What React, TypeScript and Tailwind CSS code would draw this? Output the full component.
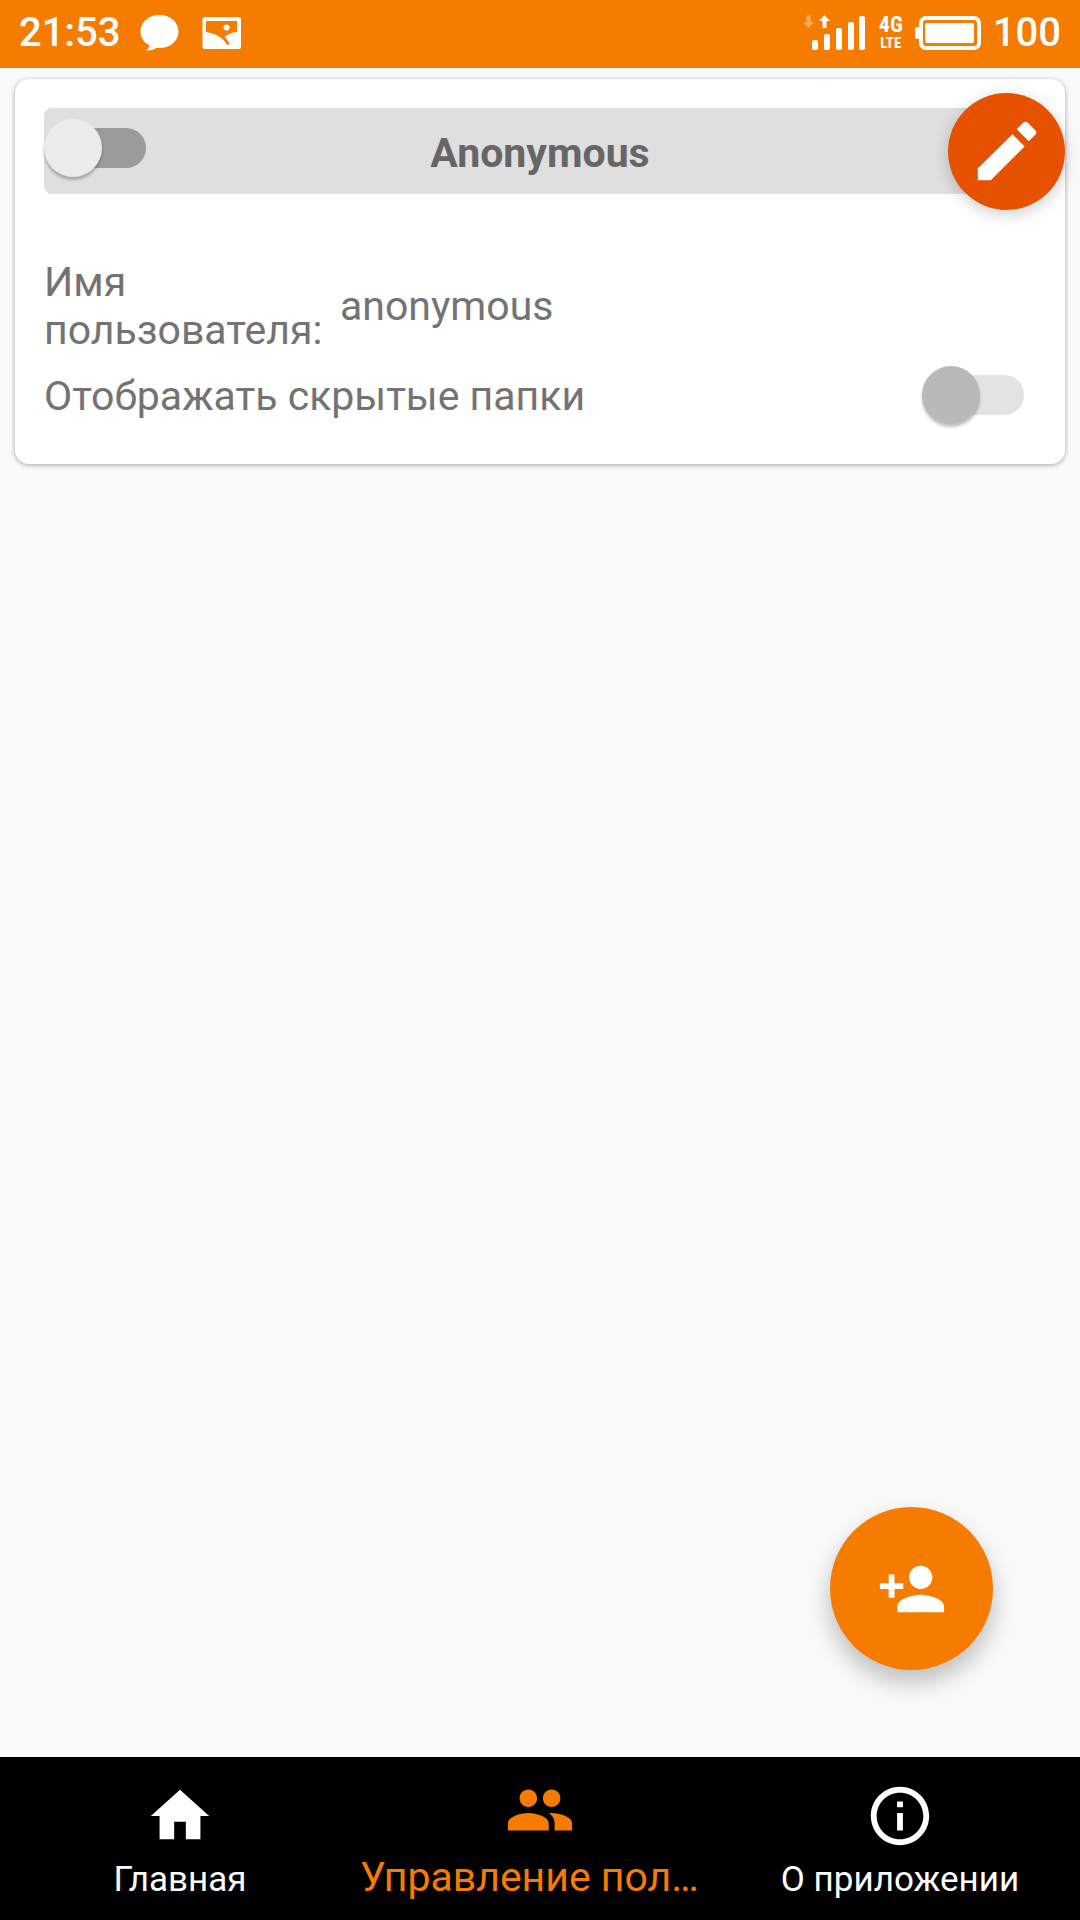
import { useState } from "react";
import clsx from "clsx";
import { MdHome, MdInfoOutline, MdPeople, MdPersonAdd } from "react-icons/md";

const tabs = [
  { id: "home", label: "Главная", icon: MdHome },
  { id: "users", label: "Управление пользователями", icon: MdPeople },
  { id: "about", label: "О приложении", icon: MdInfoOutline },
];

function ChatIcon() {
  return (
    <svg width="40" height="36" viewBox="0 0 40 36" fill="currentColor" aria-hidden="true">
      <path d="M19.500 0C30.500 0 38.500 7.200 38.500 16.500S30.500 33 19.500 33c-1 0-2-.1-3-.2-2.600 2-6 3-10.500 2.700 2-1.300 3.200-3 3.500-5C4 27.600.5 22.500.5 16.500.5 7.200 8.500 0 19.500 0z" />
    </svg>
  );
}

function PictureIcon() {
  return (
    <svg width="40" height="32" viewBox="0 0 40 32" fill="currentColor" aria-hidden="true">
      <path
        fillRule="evenodd"
        d="M3 0h33.500a2.500 2.500 0 0 1 2.500 2.500v27a2.500 2.500 0 0 1-2.500 2.500H3a2.500 2.500 0 0 1-2.500-2.500v-27A2.500 2.500 0 0 1 3 0zM4 4v11.300c7 .3 16 4 21.500 12.700l2-1c-1.200-2.800-2.700-5-4.700-7 3-2.800 7-4.500 12.200-5V4H4z"
      />
      <circle cx="24.500" cy="10.500" r="3" />
    </svg>
  );
}

function SignalIcon() {
  return (
    <svg width="64" height="36" viewBox="0 0 64 36" fill="currentColor" aria-hidden="true">
      <path opacity=".35" d="M3.500 0h4v7H11l-5.500 6L0 7h3.500z" />
      <path d="M21.500 0l5.500 6h-3.500v7h-4V6H16z" />
      <rect x="9" y="25" width="6" height="10" rx="2" />
      <rect x="21" y="19" width="6" height="16" rx="2" />
      <rect x="33" y="13" width="6" height="22" rx="2" />
      <rect x="45" y="7" width="6" height="28" rx="2" />
      <rect x="56" y="1" width="6" height="34" rx="2" />
    </svg>
  );
}

function BatteryIcon() {
  return (
    <svg width="66" height="34" viewBox="0 0 66 34" fill="currentColor" aria-hidden="true">
      <rect x="0" y="11" width="7" height="12" rx="2" />
      <rect x="6" y="2" width="58" height="30" rx="5" fill="none" stroke="currentColor" strokeWidth="4" />
      <rect x="10" y="7" width="49" height="20" rx="2" />
    </svg>
  );
}

function PencilIcon() {
  return (
    <svg width="78" height="78" viewBox="0 0 24 24" fill="currentColor" aria-hidden="true">
      <path d="M3 17.100V20.700h4L17.400 10.300l-3.700-3.800z" />
      <path d="M20.700 6.700a1 1 0 0 0 0-1.400l-2.300-2.300a1 1 0 0 0-1.400 0l-2 2 3.700 3.700z" />
    </svg>
  );
}

function StatusBar() {
  return (
    <header className="flex h-17 items-center bg-[#f57c00] px-[19px] pb-0.5 text-white">
      <span className="text-[40px] leading-12 font-medium">21:53</span>
      <div className="ml-5 flex items-center gap-[22px]">
        <ChatIcon />
        <PictureIcon />
      </div>
      <div className="ml-auto flex items-center gap-3">
        <SignalIcon />
        <div className="flex w-6 flex-col items-center font-['Liberation_Sans_Narrow','Roboto_Condensed',Roboto,sans-serif] font-bold">
          <span className="text-[22px] leading-5">4G</span>
          <span className="text-[15px] leading-4">LTE</span>
        </div>
        <BatteryIcon />
        <span className="text-[40px] leading-12 font-medium">100</span>
      </div>
    </header>
  );
}

interface SwitchProps {
  id: string;
  label?: string;
  disabled?: boolean;
  className?: string;
}

function Switch({ id, label, disabled, className }: SwitchProps) {
  return (
    <input
      id={id}
      type="checkbox"
      role="switch"
      aria-label={label}
      disabled={disabled}
      className={clsx(
        "relative h-[58px] w-[102px] shrink-0 appearance-none",
        "before:absolute before:inset-y-[9px] before:right-0 before:left-2 before:rounded-full",
        "after:absolute after:top-0 after:left-0 after:size-[58px] after:rounded-full after:shadow-[0_3px_3px_rgba(0,0,0,0.25)]",
        "checked:after:left-11",
        disabled ? "before:bg-[#e3e3e3] after:bg-[#b9b9b9]" : "before:bg-[#9b9b9b] after:bg-[#ececec]",
        className
      )}
    />
  );
}

function UserCard() {
  return (
    <section className="relative mx-[15px] mt-[11px] rounded-[14px] bg-white px-[29px] pt-[29px] pb-[38px] text-[41px] leading-12 text-[#737373] shadow-[0_1px_5px_rgba(0,0,0,0.35)]">
      <div className="grid h-[86px] grid-cols-[1fr_auto_1fr] items-center rounded-lg bg-[#dfdfdf]">
        <Switch id="user-enabled" label="Anonymous" className="mb-1.5" />
        <h2 className="mt-1 font-bold text-[#666666]">Anonymous</h2>
      </div>
      <button
        type="button"
        aria-label="Edit"
        className="absolute top-[14px] right-0 flex size-[117px] items-center justify-center rounded-full bg-[#e65100] text-white shadow-[0_4px_16px_rgba(0,0,0,0.2)]"
      >
        <PencilIcon />
      </button>

      <dl className="mt-16 flex items-center gap-4">
        <dt className="w-70 shrink-0">Имя пользователя:</dt>
        <dd>anonymous</dd>
      </dl>
      <div className="mt-3 mr-3 flex items-center justify-between">
        <label htmlFor="show-hidden">Отображать скрытые папки</label>
        <Switch id="show-hidden" disabled className="mb-0.5" />
      </div>
    </section>
  );
}

function BottomNav({ active, onChange }: { active: string; onChange: (id: string) => void }) {
  return (
    <nav className="grid h-[163px] grid-cols-3 bg-black">
      {tabs.map(({ id, label, icon: Icon }) => (
        <button
          key={id}
          type="button"
          onClick={() => onChange(id)}
          className={clsx(
            "flex min-w-0 flex-col items-center justify-end gap-2 pb-[19px]",
            id === active ? "text-[41px] leading-12 text-[#f57c00]" : "text-[35px] leading-[42px] text-white"
          )}
        >
          <Icon size={70} className="shrink-0" />
          <span className="max-w-full truncate">{label}</span>
        </button>
      ))}
    </nav>
  );
}

export default function App() {
  const [active, setActive] = useState("users");

  return (
    <div className="flex min-h-screen flex-col bg-[#fafafa] font-[Roboto,sans-serif]">
      <StatusBar />
      <main className="relative flex-1">
        <UserCard />
        <button
          type="button"
          aria-label="Add user"
          className="absolute right-[87px] bottom-[87px] flex size-[163px] items-center justify-center rounded-full bg-[#f57c00] text-white shadow-[0_12px_24px_rgba(0,0,0,0.25)]"
        >
          <MdPersonAdd size={70} />
        </button>
      </main>
      <BottomNav active={active} onChange={setActive} />
    </div>
  );
}
